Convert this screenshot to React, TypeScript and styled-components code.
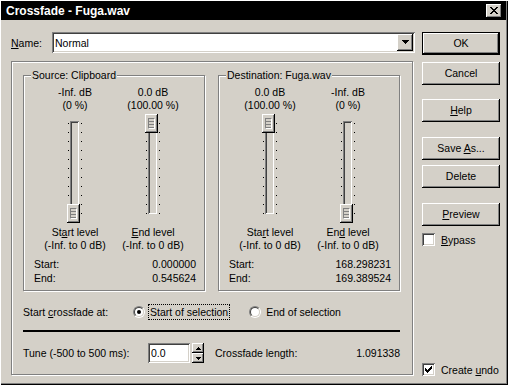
import React from "react";
import styled, { createGlobalStyle } from "styled-components";

const GlobalStyle = createGlobalStyle`
  html, body {
    margin: 0;
    padding: 0;
    background: #d4d0c8;
  }
  body {
    font-family: "Liberation Sans", Arial, sans-serif;
    font-size: 10.5px;
    color: #000;
  }
  * {
    box-sizing: border-box;
  }
`;

// classic 3d edges
const raised = `
  box-shadow: inset -1px -1px #000, inset 1px 1px #fff, inset -2px -2px #808080, inset 2px 2px #d4d0c8;
`;
const sunken = `
  box-shadow: inset 1px 1px #808080, inset -1px -1px #fff, inset 2px 2px #404040, inset -2px -2px #d4d0c8;
`;
const etched = `
  border: 1px solid #808080;
  box-shadow: inset 1px 1px #fff, 1px 1px #fff;
`;

type Rect = [number, number, number, number];

const Pixels = ({ w, h, rects }: { w: number; h: number; rects: Rect[] }) => (
  <svg width={w} height={h} viewBox={`0 0 ${w} ${h}`} shapeRendering="crispEdges" style={{ display: "block" }}>
    <path d={rects.map(([x, y, rw, rh]) => `M${x} ${y}h${rw}v${rh}h${-rw}z`).join("")} fill="#000" />
  </svg>
);

const closeRects: Rect[] = [
  [0, 0, 2, 1], [6, 0, 2, 1],
  [1, 1, 2, 1], [5, 1, 2, 1],
  [2, 2, 4, 1],
  [3, 3, 2, 1],
  [2, 4, 4, 1],
  [1, 5, 2, 1], [5, 5, 2, 1],
  [0, 6, 2, 1], [6, 6, 2, 1],
];
const downRects: Rect[] = [[0, 0, 7, 1], [1, 1, 5, 1], [2, 2, 3, 1], [3, 3, 1, 1]];
const spinUp: Rect[] = [[2, 0, 1, 1], [1, 1, 3, 1], [0, 2, 5, 1]];
const spinDown: Rect[] = [[0, 0, 5, 1], [1, 1, 3, 1], [2, 2, 1, 1]];
const checkRects: Rect[] = [
  [0, 2, 1, 3], [1, 3, 1, 3], [2, 4, 1, 3], [3, 3, 1, 3], [4, 2, 1, 3], [5, 1, 1, 3], [6, 0, 1, 3],
];

const Dialog = styled.div`
  width: 508px;
  height: 385px;
  background: #d4d0c8;
  padding: 1px 2px 2px 1px;
  box-shadow: inset 1px 1px #fff, inset -1px -1px #000, inset -2px -2px #808080;
  display: flex;
  flex-direction: column;
`;

const TitleBar = styled.div`
  height: 19px;
  background: #000;
  color: #fff;
  display: flex;
  align-items: center;
  justify-content: space-between;
  padding: 0 4px 0 5px;
`;

const TitleText = styled.span`
  font-weight: bold;
  font-size: 12px;
`;

const CloseButton = styled.div`
  width: 16px;
  height: 14px;
  background: #d4d0c8;
  ${raised}
  display: flex;
  align-items: center;
  justify-content: center;
  padding: 0 1px 1px 0;
`;

const Body = styled.div`
  flex: 1;
  display: flex;
  gap: 7px;
  padding: 12px 0 0 10px;
`;

const LeftPane = styled.div`
  width: 404px;
  display: flex;
  flex-direction: column;
`;

const NameRow = styled.div`
  height: 21px;
  display: flex;
  align-items: center;
`;

const NameLabel = styled.span`
  width: 41px;
`;

const Key = styled.span`
  text-decoration: underline;
`;

const Combo = styled.div`
  flex: 1;
  height: 21px;
  background: #fff;
  ${sunken}
  padding: 2px;
  display: flex;
  align-items: center;
`;

const ComboText = styled.span`
  flex: 1;
  padding-left: 1px;
`;

const DropButton = styled.div`
  width: 16px;
  height: 17px;
  background: #d4d0c8;
  ${raised}
  display: flex;
  align-items: center;
  justify-content: center;
  padding-bottom: 1px;
`;

const Frame = styled.div`
  margin-top: 8px;
  width: 402px;
  height: 314px;
  ${etched}
  padding: 13px 12px 0 11px;
  display: flex;
  flex-direction: column;
`;

const Groups = styled.div`
  display: flex;
  gap: 13px;
`;

const Group = styled.div`
  position: relative;
  width: 182px;
  height: 216px;
  ${etched}
  padding-top: 10px;
`;

const Legend = styled.span`
  position: absolute;
  top: -7px;
  left: 7px;
  padding: 0 1px;
  line-height: 13px;
  background: #d4d0c8;
  white-space: nowrap;
`;

const Columns = styled.div`
  display: flex;
  padding-left: 12px;
`;

const Column = styled.div`
  width: 78px;
  display: flex;
  flex-direction: column;
  align-items: center;
`;

const Caption = styled.div<{ $mt?: number }>`
  line-height: 13px;
  white-space: nowrap;
  text-align: center;
  margin-top: ${(p) => p.$mt ?? 0}px;
`;

const SliderBox = styled.div`
  position: relative;
  width: 16px;
  height: 112px;
  display: flex;
  align-items: flex-start;
  padding-left: 1px;
`;

const Ticks = styled.div`
  width: 1px;
  height: 91px;
  margin-top: 11px;
  background: repeating-linear-gradient(to bottom, #000 0 1px, transparent 1px 9px);
`;

const Track = styled.div`
  width: 9px;
  height: 93px;
  margin: 9px 2px 0 1px;
  background: #d4d0c8;
  ${sunken}
`;

const Thumb = styled.div`
  position: absolute;
  left: 0;
  width: 13px;
  height: 19px;
  background: #d4d0c8;
  ${raised}
  display: flex;
  align-items: center;
  justify-content: center;
`;

const Grip = styled.div`
  width: 7px;
  height: 11px;
  border: 1px solid #808080;
  border-right-color: #fff;
  border-bottom-color: #fff;
  background: repeating-linear-gradient(to bottom, transparent 0 2px, #808080 2px 3px);
  background-size: 100% 9px;
  background-repeat: no-repeat;
`;

const Stats = styled.div`
  display: grid;
  grid-template-columns: 1fr auto;
  line-height: 14px;
  padding: 0 8px 0 10px;
  margin-top: 5px;
`;

const RadioRow = styled.div`
  margin-top: 13px;
  height: 16px;
  display: flex;
  align-items: center;
`;

const RowLabel = styled.span<{ $w: number; $ml?: number }>`
  width: ${(p) => p.$w}px;
  margin-left: ${(p) => p.$ml ?? 0}px;
  white-space: nowrap;
`;

const Option = styled.div<{ $ml?: number }>`
  display: flex;
  align-items: center;
  gap: 3px;
  margin-left: ${(p) => p.$ml ?? 0}px;
`;

const RadioOuter = styled.div`
  width: 12px;
  height: 12px;
  border-radius: 50%;
  border: 1px solid;
  border-color: #808080 #fff #fff #808080;
`;

const RadioInner = styled.div`
  width: 10px;
  height: 10px;
  border-radius: 50%;
  border: 1px solid;
  border-color: #404040 #d4d0c8 #d4d0c8 #404040;
  background: #fff;
  display: flex;
  align-items: center;
  justify-content: center;
`;

const RadioDot = styled.div`
  width: 4px;
  height: 4px;
  border-radius: 50%;
  background: #000;
`;

const OptionText = styled.span<{ $focus?: boolean }>`
  border: 1px ${(p) => (p.$focus ? "dotted #000" : "solid transparent")};
  padding: 0 1px;
  line-height: 14px;
  white-space: nowrap;
`;

const Rule = styled.div`
  margin-top: 10px;
  height: 2px;
  background: #000;
`;

const TuneRow = styled.div`
  margin-top: 11px;
  height: 20px;
  display: flex;
  align-items: center;
`;

const Field = styled.div`
  width: 42px;
  height: 20px;
  background: #fff;
  ${sunken}
  padding: 0 3px;
  display: flex;
  align-items: center;
`;

const Spin = styled.div`
  margin-left: 2px;
  width: 12px;
  height: 20px;
  display: flex;
  flex-direction: column;
`;

const SpinButton = styled.div`
  flex: 1;
  background: #d4d0c8;
  ${raised}
  display: flex;
  align-items: center;
  justify-content: center;
`;

const Value = styled.span`
  flex: 1;
  text-align: right;
`;

const RightPane = styled.div`
  width: 78px;
  display: flex;
  flex-direction: column;
  padding-bottom: 7px;
`;

const Button = styled.div<{ $mt: number; $default?: boolean }>`
  width: 78px;
  height: 23px;
  margin-top: ${(p) => p.$mt}px;
  background: #d4d0c8;
  border: ${(p) => (p.$default ? "1px solid #000" : "none")};
  ${raised}
  display: flex;
  align-items: center;
  justify-content: center;
  padding-bottom: 1px;
  white-space: pre;
`;

const CheckRow = styled.div<{ $mt?: number; $push?: boolean }>`
  display: flex;
  align-items: center;
  gap: 6px;
  height: 13px;
  margin-top: ${(p) => (p.$push ? "auto" : `${p.$mt ?? 0}px`)};
  white-space: nowrap;
`;

const CheckBox = styled.div`
  width: 13px;
  height: 13px;
  background: #fff;
  ${sunken}
  padding: 3px;
`;

const keyed = (text: string, at: number) => (
  <span>
    {text.slice(0, at)}
    <Key>{text[at]}</Key>
    {text.slice(at + 1)}
  </span>
);

type Level = { db: string; pct: string; value: number; label: string; key: number };

const Slider = ({ value }: { value: number }) => (
  <SliderBox>
    <Ticks />
    <Track />
    <Ticks />
    <Thumb style={{ top: 2 + Math.round((1 - value) * 90) }}>
      <Grip />
    </Thumb>
  </SliderBox>
);

const LevelGroup = ({ title, levels, start, end }: { title: string; levels: Level[]; start: string; end: string }) => (
  <Group>
    <Legend>{title}</Legend>
    <Columns>
      {levels.map((l, i) => (
        <Column key={i}>
          <Caption>{l.db}</Caption>
          <Caption>{l.pct}</Caption>
          <Slider value={l.value} />
          <Caption $mt={2}>{keyed(l.label, l.key)}</Caption>
          <Caption>(-Inf. to 0 dB)</Caption>
        </Column>
      ))}
    </Columns>
    <Stats>
      <span>Start:</span>
      <span>{start}</span>
      <span>End:</span>
      <span>{end}</span>
    </Stats>
  </Group>
);

const sourceLevels: Level[] = [
  { db: "-Inf. dB", pct: "(0 %)", value: 0, label: "Start level", key: 2 },
  { db: "0.0 dB", pct: "(100.00 %)", value: 1, label: "End level", key: 0 },
];
const destLevels: Level[] = [
  { db: "0.0 dB", pct: "(100.00 %)", value: 1, label: "Start level", key: 3 },
  { db: "-Inf. dB", pct: "(0 %)", value: 0, label: "End level", key: 2 },
];

export default function App() {
  return (
    <>
      <GlobalStyle />
      <Dialog>
        <TitleBar>
          <TitleText>Crossfade - Fuga.wav</TitleText>
          <CloseButton>
            <Pixels w={8} h={7} rects={closeRects} />
          </CloseButton>
        </TitleBar>
        <Body>
          <LeftPane>
            <NameRow>
              <NameLabel>{keyed("Name:", 0)}</NameLabel>
              <Combo>
                <ComboText>Normal</ComboText>
                <DropButton>
                  <Pixels w={7} h={4} rects={downRects} />
                </DropButton>
              </Combo>
            </NameRow>
            <Frame>
              <Groups>
                <LevelGroup title="Source: Clipboard" levels={sourceLevels} start="0.000000" end="0.545624" />
                <LevelGroup title="Destination: Fuga.wav" levels={destLevels} start="168.298231" end="169.389524" />
              </Groups>
              <RadioRow>
                <RowLabel $w={110}>{keyed("Start crossfade at:", 6)}</RowLabel>
                <Option>
                  <RadioOuter>
                    <RadioInner>
                      <RadioDot />
                    </RadioInner>
                  </RadioOuter>
                  <OptionText $focus>Start of selection</OptionText>
                </Option>
                <Option $ml={19}>
                  <RadioOuter>
                    <RadioInner />
                  </RadioOuter>
                  <OptionText>End of selection</OptionText>
                </Option>
              </RadioRow>
              <Rule />
              <TuneRow>
                <RowLabel $w={125}>Tune (-500 to 500 ms):</RowLabel>
                <Field>0.0</Field>
                <Spin>
                  <SpinButton>
                    <Pixels w={5} h={3} rects={spinUp} />
                  </SpinButton>
                  <SpinButton>
                    <Pixels w={5} h={3} rects={spinDown} />
                  </SpinButton>
                </Spin>
                <RowLabel $w={100} $ml={11}>
                  Crossfade length:
                </RowLabel>
                <Value>1.091338</Value>
              </TuneRow>
            </Frame>
          </LeftPane>
          <RightPane>
            <Button $mt={0} $default>
              OK
            </Button>
            <Button $mt={7}>Cancel</Button>
            <Button $mt={14}>{keyed("Help", 0)}</Button>
            <Button $mt={15}>{keyed("Save As...", 5)}</Button>
            <Button $mt={5}>Delete</Button>
            <Button $mt={15}>{keyed("Preview", 0)}</Button>
            <CheckRow $mt={7}>
              <CheckBox />
              {keyed("Bypass", 0)}
            </CheckRow>
            <CheckRow $push>
              <CheckBox>
                <Pixels w={7} h={7} rects={checkRects} />
              </CheckBox>
              {keyed("Create undo", 7)}
            </CheckRow>
          </RightPane>
        </Body>
      </Dialog>
    </>
  );
}
